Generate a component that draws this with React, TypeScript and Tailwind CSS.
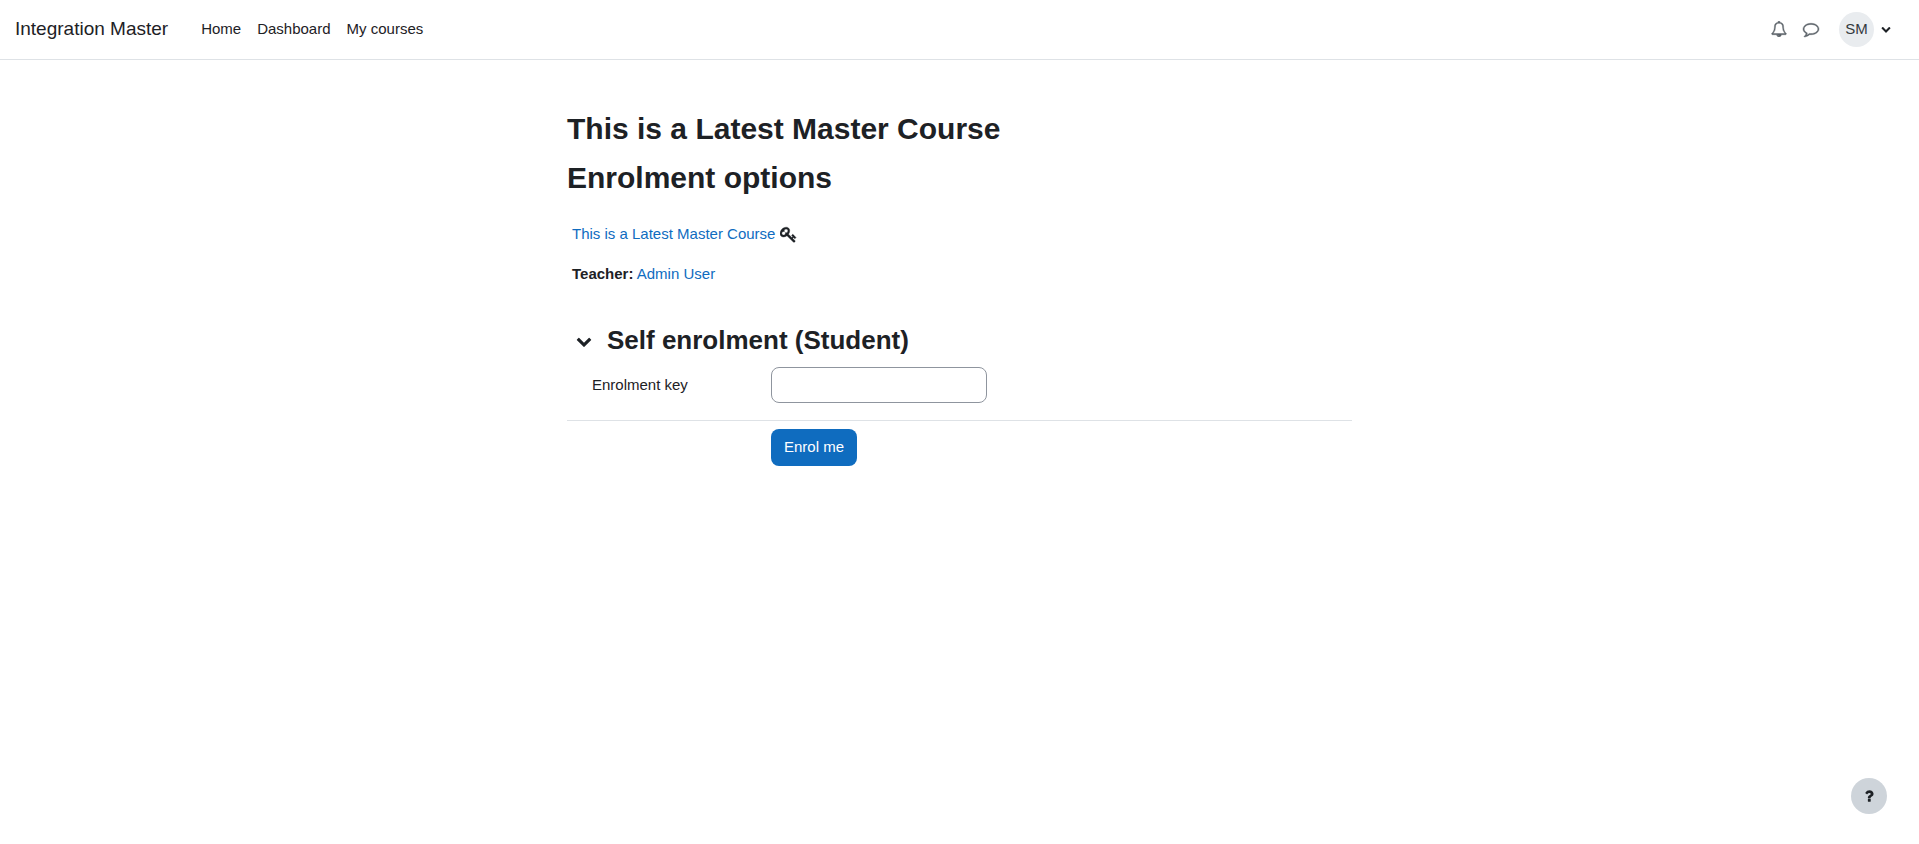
import React, { useState } from 'react';

const ICON_PATHS = {
  bell: 'M912 1696q0-16-16-16-59 0-101.5-42.5t-42.5-101.5q0-16-16-16t-16 16q0 73 51.5 124.5t124.5 51.5q16 0 16-16zm-666-288h1300q-266-300-266-832 0-51-24-105t-69-103-121.5-80.5-169.5-31.5-169.5 31.5-121.5 80.5-69 103-24 105q0 532-266 832zm1482 0q0 52-38 90t-90 38h-448q0 106-75 181t-181 75-181-75-75-181h-448q-52 0-90-38t-38-90q50-42 91-88t85-119.5 74.5-158.5 50-206 19.5-260q0-152 117-282.5t307-158.5q-8-19-8-39 0-40 28-68t68-28 68 28 28 68q0 20-8 39 190 28 307 158.5t117 282.5q0 139 19.5 260t50 206 74.5 158.5 85 119.5 91 88z',
  comment: 'M896 384q-204 0-381.5 69.5t-282 187.5-104.5 255q0 112 71.5 213.5t201.5 175.5l87 50-27 96q-24 91-70 172 152-63 275-171l43-38 57 6q69 8 130 8 204 0 381.5-69.5t282-187.5 104.5-255-104.5-255-282-187.5-381.5-69.5zm896 512q0 174-120 321.5t-326 233-450 85.5q-70 0-145-8-198 175-460 242-49 14-114 22h-5q-15 0-27-10.5t-16-27.5v-1q-3-4-.5-12t2-10 4.5-9.5l6-9 7-8.5 8-9q7-8 31-34.5t34.5-38 31-39.5 32.5-51 27-59 26-76q-157-89-247.5-220t-90.5-281q0-174 120-321.5t326-233 450-85.5 450 85.5 326 233 120 321.5z',
  key: 'M832 512q0-80-56-136t-136-56-136 56-56 136q0 42 19 83-41-19-83-19-80 0-136 56t-56 136 56 136 136 56 136-56 56-136q0-42-19-83 41 19 83 19 80 0 136-56t56-136zm851 704q0 17-49 66t-66 49q-9 0-28.5-16t-36.5-33-38.5-40-24.5-26l-96 96 220 220q28 28 28 68 0 42-39 81t-81 39q-40 0-68-28l-671-671q-176 131-365 131-163 0-265.5-102.5t-102.5-265.5q0-160 95-313t248-248 313-95q163 0 265.5 102.5t102.5 265.5q0 189-131 365l355 355 96-96q-3-3-26-24.5t-40-38.5-33-36.5-16-28.5q0-17 49-66t66-49q13 0 23 10 6 6 46 44.5t82 79.5 86.5 86 73 78 28.5 41z',
  chevronDown: 'M1683 808l-742 741q-19 19-45 19t-45-19l-742-741q-19-19-19-45.5t19-45.5l166-165q19-19 45-19t45 19l531 531 531-531q19-19 45-19t45 19l166 165q19 19 19 45.5t-19 45.5z',
  question: 'M1088 1256v240q0 16-12 28t-28 12h-240q-16 0-28-12t-12-28v-240q0-16 12-28t28-12h240q16 0 28 12t12 28zm316-600q0 54-15.5 101t-35 76.5-55 59.5-57.5 43.5-61 35.5q-41 23-68.5 65t-27.5 67q0 17-12 32.5t-28 15.5h-240q-15 0-25.5-18.5t-10.5-37.5v-45q0-83 65-156.5t143-108.5q59-27 84-56t25-76q0-42-46.5-74t-107.5-32q-65 0-108 29-35 25-107 115-13 16-31 16-12 0-25-8l-164-125q-13-10-15.5-25t5.5-28q160-266 464-266 80 0 161 31t146 83 106 127.5 41 158.5z',
};

const NAV_LINKS = ['Home', 'Dashboard', 'My courses'];

const Icon: React.FC<{ name: keyof typeof ICON_PATHS; className: string }> = ({ name, className }) => (
  <svg viewBox="0 0 1792 1792" fill="currentColor" aria-hidden="true" className={className}>
    <path d={ICON_PATHS[name]} />
  </svg>
);

const Navbar: React.FC = () => (
  <header className="flex h-15 items-center border-b border-[#dee2e6] pr-4 pb-px pl-[15px]">
    <a href="#" className="mr-[25px] text-[19px]">
      Integration Master
    </a>
    <nav className="flex h-full">
      {NAV_LINKS.map((label) => (
        <a key={label} href="#" className="flex items-center px-2">
          {label}
        </a>
      ))}
    </nav>
    <div className="ml-auto flex items-center pr-2">
      <button type="button" aria-label="Notifications" className="px-2 text-[#5c6369]">
        <Icon name="bell" className="size-4 stroke-current stroke-[50]" />
      </button>
      <button type="button" aria-label="Messages" className="px-2 text-[#5c6369]">
        <Icon name="comment" className="size-4 overflow-visible stroke-current stroke-[50]" />
      </button>
      <button type="button" aria-label="User menu" className="ml-3 flex items-center gap-[7px] pr-1">
        <span className="flex size-[35px] items-center justify-center rounded-full bg-[#e9ecef] text-[#343a40]">
          SM
        </span>
        <Icon name="chevronDown" className="size-2.5" />
      </button>
    </div>
  </header>
);

const SelfEnrolment: React.FC = () => {
  const [open, setOpen] = useState(true);
  const [enrolKey, setEnrolKey] = useState('');

  return (
    <form onSubmit={(event) => event.preventDefault()} className="mt-[38px]">
      <div className="flex items-center gap-[15px] pl-[9px]">
        <button
          type="button"
          aria-label="Toggle self enrolment"
          aria-expanded={open}
          onClick={() => setOpen(!open)}
          className="pt-0.5"
        >
          <Icon name="chevronDown" className="size-4" />
        </button>
        <h3 className="text-[26px] leading-8 font-bold">Self enrolment (Student)</h3>
      </div>
      {open && (
        <div className="mt-[11px] flex items-center pl-[25px]">
          <label htmlFor="enrol-key" className="w-[179px]">
            Enrolment key
          </label>
          <input
            id="enrol-key"
            type="password"
            value={enrolKey}
            onChange={(event) => setEnrolKey(event.target.value)}
            className="h-9 w-54 rounded-lg border border-[#8f959e] px-3"
          />
        </div>
      )}
      <div className="mt-[17px] border-t border-[#dee2e6] pt-2 pl-51">
        <button type="submit" className="h-[37px] rounded-lg bg-[#0f6cbf] px-[13px] pb-px text-white">
          Enrol me
        </button>
      </div>
    </form>
  );
};

const App: React.FC = () => (
  <div className="min-h-screen bg-white font-['Liberation_Sans',Arial,sans-serif] text-[15px] leading-6 text-[#1d2125]">
    <Navbar />
    <main className="mx-auto max-w-[785px] pt-[49px]">
      <h1 className="text-3xl leading-10 font-bold">This is a Latest Master Course</h1>
      <h2 className="mt-[9px] text-3xl leading-10 font-bold">Enrolment options</h2>
      <div className="mt-6 flex items-center gap-[5px] px-[5px]">
        <a href="#" className="text-[#0f6cbf]">
          This is a Latest Master Course
        </a>
        <Icon name="key" className="size-[17px] stroke-current stroke-[40]" />
      </div>
      <p className="mt-4 px-[5px]">
        <span className="font-bold">Teacher:</span>{' '}
        <a href="#" className="text-[#0f6cbf]">
          Admin User
        </a>
      </p>
      <SelfEnrolment />
    </main>
    <button
      type="button"
      aria-label="Help"
      className="fixed right-8 bottom-[30px] flex size-9 items-center justify-center rounded-full bg-[#ced4da]"
    >
      <Icon name="question" className="size-4" />
    </button>
  </div>
);

export default App;
